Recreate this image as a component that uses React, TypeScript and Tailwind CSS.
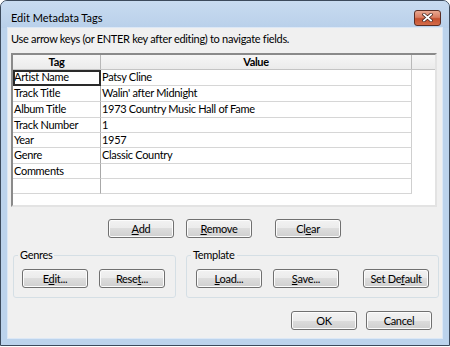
import React from "react";

const rows: [string, string, number][] = [
  ["Artist Name", "Patsy Cline", 16],
  ["Track Title", "Walin' after Midnight", 16],
  ["Album Title", "1973 Country Music Hall of Fame", 16],
  ["Track Number", "1", 15],
  ["Year", "1957", 15],
  ["Genre", "Classic Country", 16],
  ["Comments", "", 15],
  ["", "", 15],
];

const Btn = ({ children, className = "w-[66px]" }: { children: React.ReactNode; className?: string }) => (
  <button
    className={`${className} h-[19px] shrink-0 rounded-[3px] border border-[#707070] bg-[linear-gradient(#f2f2f2,#ebebeb_50%,#dddddd_50%,#cfcfcf)] shadow-[inset_0_0_0_1px_#fcfcfc] leading-[15px] text-black`}
  >
    {children}
  </button>
);

const U = ({ children }: { children: React.ReactNode }) => <span className="underline underline-offset-[1px]">{children}</span>;

export default function App() {
  return (
    <div className="w-[450px] h-[347px] bg-white font-['Lato',sans-serif] text-[11px] tracking-[-0.3px] text-black">
      <div className="w-[450px] h-[346px] rounded-t-[7px] border border-[#3c4a5c] bg-[#bcd3ec] flex flex-col overflow-hidden">
        {/* title bar */}
        <div className="h-[27px] shrink-0 flex items-center pl-[10px] pr-[8px] pt-[6px] bg-[linear-gradient(#c8dbf0,#b9d0ea)]">
          <span className="flex-1 leading-[14px] tracking-normal">Edit Metadata Tags</span>
          <div className="w-[27px] h-[16px] rounded-[3px] border border-[#5b2e25] bg-[linear-gradient(#e9a891,#d97e63_45%,#c4502f_55%,#d46c4a)] flex items-center justify-center">
            <svg width="11" height="9" viewBox="0 0 11 9">
              <path d="M2 1.5L9 7.5M9 1.5L2 7.5" stroke="#4a2a24" strokeWidth="3.4" strokeLinecap="square" />
              <path d="M2 1.5L9 7.5M9 1.5L2 7.5" stroke="#ffffff" strokeWidth="1.8" strokeLinecap="square" />
            </svg>
          </div>
        </div>

        {/* client area */}
        <div className="flex-1 mx-[7px] mb-[7px] bg-[#f0f0f0] shadow-[0_0_0_1px_#dce8f6] flex flex-col px-[3px]">
          <p className="mt-[4px] h-[14px] leading-[14px]">Use arrow keys (or ENTER key after editing) to navigate fields.</p>

          {/* grid */}
          <div className="mt-[7px] w-[426px] h-[154px] shrink-0 border-2 border-t-[#8a8a8a] border-l-[#8a8a8a] border-r-[#e3e3e3] border-b-[#e3e3e3] bg-white flex flex-col">
            <div className="h-[15px] shrink-0 flex bg-[linear-gradient(#f6f6f6,#ebebeb)] border-b border-[#c4c4c4] font-bold leading-[14px]">
              <div className="w-[88px] border-r border-[#b8b8b8] text-center">Tag</div>
              <div className="w-[311px] border-r border-[#b8b8b8] text-center">Value</div>
              <div className="flex-1" />
            </div>
            {rows.map(([tag, value, h], i) => (
              <div key={i} className="flex shrink-0" style={{ height: h }}>
                <div
                  className={`w-[88px] border-r border-b border-r-[#a8a8a8] border-b-[#d6d6d6] pl-[1px] flex items-center ${
                    i === 0 ? "outline-2 outline-[#2a2a2a] -outline-offset-2" : ""
                  }`}
                >
                  {tag}
                </div>
                <div className="w-[311px] border-r border-b border-r-[#cfcfcf] border-b-[#d6d6d6] pl-[1px] flex items-center">{value}</div>
              </div>
            ))}
          </div>

          {/* add / remove / clear */}
          <div className="mt-[12px] flex pl-[97px]">
            <Btn><U>A</U>dd</Btn>
            <div className="w-[12px]" />
            <Btn><U>R</U>emove</Btn>
            <div className="w-[23px]" />
            <Btn>Cl<U>e</U>ar</Btn>
          </div>

          {/* group boxes */}
          <div className="mt-[10px] flex pl-[2px] gap-[10px]">
            <fieldset className="w-[163px] rounded-[3px] border border-[#d5dfe5] flex pl-[8px] pt-[7px] pb-[9px] gap-[11px]">
              <legend className="-ml-[4px] px-[2px] leading-[14px]">Genres</legend>
              <Btn>E<U>d</U>it...</Btn>
              <Btn>Rese<U>t</U>...</Btn>
            </fieldset>
            <fieldset className="w-[253px] rounded-[3px] border border-[#d5dfe5] flex pl-[9px] pt-[7px] pb-[9px]">
              <legend className="-ml-[5px] px-[2px] leading-[14px]">Template</legend>
              <Btn><U>L</U>oad...</Btn>
              <div className="w-[11px]" />
              <Btn><U>S</U>ave...</Btn>
              <div className="w-[24px]" />
              <Btn>Set De<U>f</U>ault</Btn>
            </fieldset>
          </div>

          {/* ok / cancel */}
          <div className="mt-[13px] flex justify-end pr-[7px] gap-[9px]">
            <Btn>OK</Btn>
            <Btn>Cancel</Btn>
          </div>
        </div>
      </div>
    </div>
  );
}
